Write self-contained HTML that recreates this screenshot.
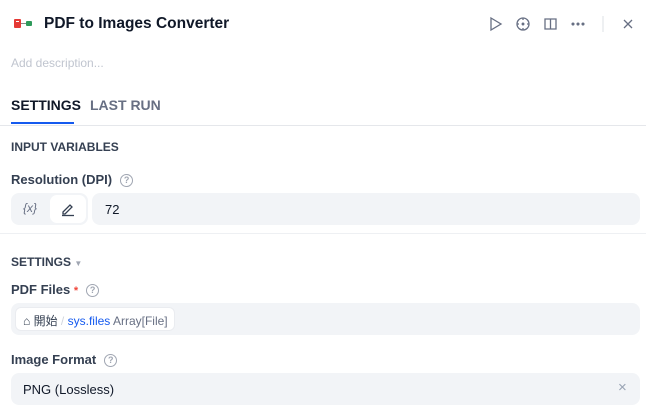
<!DOCTYPE html>
<html><head><meta charset="utf-8"><style>
*{box-sizing:border-box;margin:0;padding:0}
body{width:646px;height:418px;background:#fff;font-family:"Liberation Sans","Noto Sans CJK SC",sans-serif;position:relative;overflow:hidden;color:#354052}
.a{position:absolute}
.lbl{font-size:13px;font-weight:bold;color:#354052}
.q{display:inline-block;width:13px;height:13px;border:1.3px solid #a0a6b2;border-radius:50%;font-size:9px;color:#a0a6b2;text-align:center;line-height:11px;font-weight:bold;vertical-align:1px;margin-left:8px}
.box{background:#f2f4f7;border-radius:8px}
</style></head><body>
<div class="a" style="left:14px;top:19px;width:7px;height:9px;background:#e53935;border-radius:1px"></div>
<div class="a" style="left:16px;top:21px;width:3px;height:1px;background:#fff"></div>
<div class="a" style="left:21px;top:23px;width:5px;height:1px;background:#888"></div>
<div class="a" style="left:26px;top:21px;width:6px;height:5px;background:#2e9a5a;border-radius:1px"></div>
<div class="a" style="left:44px;top:15px;font-size:15.5px;font-weight:bold;color:#101828">PDF to Images Converter</div>
<svg class="a" style="left:486px;top:14px" width="150" height="20" fill="none" stroke="#676f83" stroke-width="1.3">
<path d="M5 4 L15 10 L5 16 Z"/>
<circle cx="37" cy="10" r="6"/><circle cx="37" cy="10" r="0.8" fill="#676f83"/><path d="M37 4v2M37 14v2M31 10h2M41 10h2"/>
<path d="M59 5h5.5v10H59zM64.5 5H70v10h-5.5"/>
<circle cx="87" cy="10" r="0.9" fill="#676f83"/><circle cx="92" cy="10" r="0.9" fill="#676f83"/><circle cx="97" cy="10" r="0.9" fill="#676f83"/>
<path d="M117 2v16" stroke="#e5e7eb"/>
<path d="M138 6l8 8M146 6l-8 8"/>
</svg>
<div class="a" style="left:11px;top:56px;font-size:12px;color:#c0c5cf">Add description...</div>
<div class="a" style="left:11px;top:97px;font-size:14px;font-weight:bold;color:#101828">SETTINGS</div>
<div class="a" style="left:90px;top:97px;font-size:14px;font-weight:bold;color:#676f83">LAST RUN</div>
<div class="a" style="left:11px;top:122px;width:63px;height:2px;background:#155aef"></div>
<div class="a" style="left:0;top:125px;width:646px;height:1px;background:#e5e7eb"></div>
<div class="a lbl" style="left:11px;top:140px;font-size:12px">INPUT VARIABLES</div>
<div class="a lbl" style="left:11px;top:172px">Resolution (DPI)<span class="q">?</span></div>
<div class="a box" style="left:11px;top:193px;width:77px;height:32px"></div>
<div class="a" style="left:23px;top:201px;font-size:12px;color:#676f83;font-style:italic">{x}</div>
<div class="a" style="left:50px;top:195px;width:36px;height:28px;background:#fff;border-radius:7px"></div>
<svg class="a" style="left:60px;top:201px" width="16" height="16" fill="none" stroke="#354052" stroke-width="1.3"><path d="M3 11l7-7 2 2-7 7H3z"/><path d="M2 14.5h12"/></svg>
<div class="a box" style="left:92px;top:193px;width:548px;height:32px"></div>
<div class="a" style="left:105px;top:202px;font-size:13px;color:#101828">72</div>
<div class="a" style="left:0;top:233px;width:646px;height:1px;background:#eef0f3"></div>
<div class="a lbl" style="left:11px;top:255px;font-size:12px">SETTINGS <span style="color:#a0a6b2;font-size:8px">▼</span></div>
<div class="a lbl" style="left:11px;top:282px">PDF Files <span style="color:#f04438;font-size:11px">*</span><span class="q">?</span></div>
<div class="a box" style="left:11px;top:303px;width:629px;height:32px"></div>
<div class="a" style="left:15px;top:307px;width:160px;height:24px;background:#fff;border-radius:6px;border:1px solid #eaecf0"></div>
<div class="a" style="left:23px;top:312px;font-size:12px;color:#354052">⌂ 開始 <span style="color:#d0d5dd">/</span> <span style="color:#155aef">sys.files</span> <span style="color:#676f83">Array[File]</span></div>
<div class="a lbl" style="left:11px;top:352px">Image Format<span class="q">?</span></div>
<div class="a box" style="left:11px;top:373px;width:629px;height:32px"></div>
<div class="a" style="left:23px;top:382px;font-size:13px;color:#101828">PNG (Lossless)</div>
<div class="a" style="left:618px;top:379px;font-size:15px;color:#98a2b3">×</div>
</body></html>
